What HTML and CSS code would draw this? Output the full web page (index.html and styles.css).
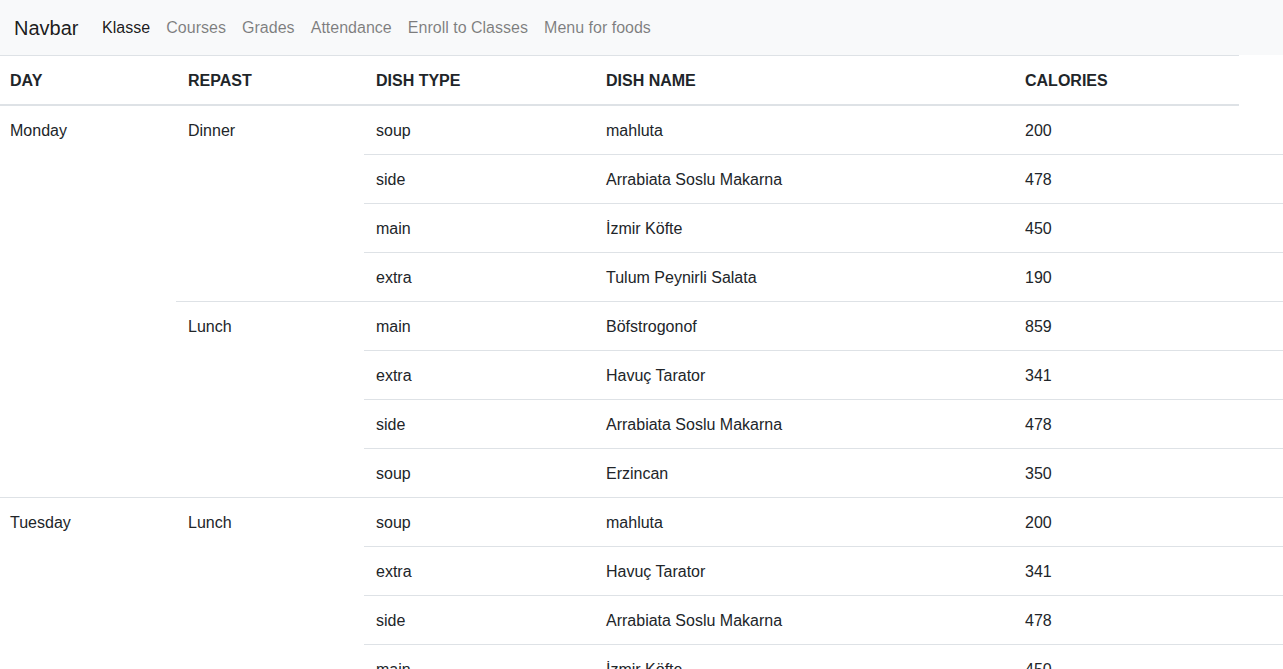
FILE: index.html
```html
<!DOCTYPE html>
<html lang="en">
<head>
<meta charset="utf-8">
<title>Menu for foods</title>
<link rel="stylesheet" href="styles.css">
</head>
<body>
<nav class="navbar">
  <a class="brand" href="#">Navbar</a>
  <ul class="nav">
    <li><a class="nav-link active" href="#">Klasse</a></li>
    <li><a class="nav-link" href="#">Courses</a></li>
    <li><a class="nav-link" href="#">Grades</a></li>
    <li><a class="nav-link" href="#">Attendance</a></li>
    <li><a class="nav-link" href="#">Enroll to Classes</a></li>
    <li><a class="nav-link" href="#">Menu for foods</a></li>
  </ul>
</nav>
<table class="menu-table">
  <colgroup>
    <col class="c-day"><col class="c-repast"><col class="c-type"><col class="c-name"><col class="c-cal">
  </colgroup>
  <thead>
    <tr>
      <th class="day">Day</th>
      <th>Repast</th>
      <th>Dish Type</th>
      <th>Dish Name</th>
      <th class="last">Calories</th>
    </tr>
  </thead>
  <tbody>
    <tr><td class="day" rowspan="8">Monday</td><td rowspan="4">Dinner</td><td>soup</td><td>mahluta</td><td>200</td></tr>
    <tr><td>side</td><td>Arrabiata Soslu Makarna</td><td>478</td></tr>
    <tr><td>main</td><td>İzmir Köfte</td><td>450</td></tr>
    <tr><td>extra</td><td>Tulum Peynirli Salata</td><td>190</td></tr>
    <tr><td rowspan="4">Lunch</td><td>main</td><td>Böfstrogonof</td><td>859</td></tr>
    <tr><td>extra</td><td>Havuç Tarator</td><td>341</td></tr>
    <tr><td>side</td><td>Arrabiata Soslu Makarna</td><td>478</td></tr>
    <tr><td>soup</td><td>Erzincan</td><td>350</td></tr>
    <tr><td class="day" rowspan="4">Tuesday</td><td rowspan="4">Lunch</td><td>soup</td><td>mahluta</td><td>200</td></tr>
    <tr><td>extra</td><td>Havuç Tarator</td><td>341</td></tr>
    <tr><td>side</td><td>Arrabiata Soslu Makarna</td><td>478</td></tr>
    <tr><td>main</td><td>İzmir Köfte</td><td>450</td></tr>
  </tbody>
</table>
</body>
</html>
```
FILE: styles.css
```css
* { box-sizing: border-box; }
html, body { margin: 0; padding: 0; }
body {
  font-family: "Liberation Sans", Arial, sans-serif;
  font-size: 16px;
  line-height: 24px;
  color: #212529;
  background: #fff;
  overflow: hidden;
}
.navbar {
  display: flex;
  align-items: center;
  height: 55px;
  padding: 0 14px;
  background: #f8f9fa;
}
.brand {
  font-size: 20px;
  line-height: 30px;
  color: rgba(0,0,0,.9);
  text-decoration: none;
  margin-right: 15.5px;
}
.nav {
  display: flex;
  list-style: none;
  margin: 0;
  padding: 0;
}
.nav-link {
  display: block;
  padding: 8px 8.1px;
  color: rgba(0,0,0,.5);
  text-decoration: none;
}
.nav-link.active { color: rgba(0,0,0,.9); }

.menu-table {
  width: 100%;
  border-collapse: collapse;
  table-layout: fixed;
}
.c-day { width: 176px; }
.c-repast { width: 188px; }
.c-type { width: 230px; }
.c-name { width: 419px; }
.c-cal { width: auto; }
.menu-table th,
.menu-table td {
  padding: 13px 12px 11px;
  text-align: left;
  vertical-align: top;
  border-top: 1px solid #dee2e6;
}
.menu-table .day { padding-left: 10px; }
.menu-table th {
  font-weight: bold;
  text-transform: uppercase;
  vertical-align: bottom;
  border-bottom: 2px solid #dee2e6;
}
.menu-table th.last { position: relative; }
.menu-table th.last::after {
  content: "";
  position: absolute;
  top: -1px;
  bottom: -2px;
  right: 0;
  width: 44px;
  background: #fff;
}
.menu-table tbody tr:first-child td { border-top: 0; }
```
